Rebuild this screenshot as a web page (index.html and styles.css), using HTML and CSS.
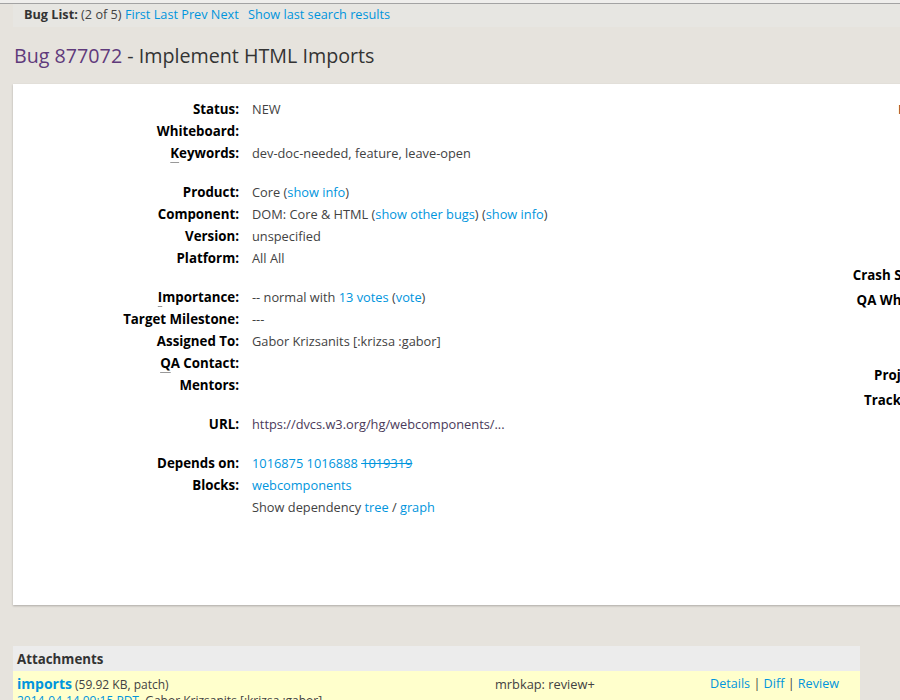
FILE: index.html
```html
<!DOCTYPE html>
<html>
<head>
<meta charset="utf-8">
<title>Bug 877072 - Implement HTML Imports</title>
<link rel="stylesheet" href="styles.css">
</head>
<body>
<div class="topline"></div>
<div class="navbar">
  <b class="nav-label">Bug List:</b> (2 of 5)
  <a href="#">First</a> <a href="#">Last</a> <a href="#">Prev</a> <a href="#">Next</a>
  <a href="#" class="nav-last">Show last search results</a>
</div>
<h1 class="title"><a href="#" class="bug-id">Bug 877072</a> - Implement HTML Imports</h1>

<div class="card">
  <div class="fields">
    <div class="lbl">Status:</div><div class="val">NEW</div>
    <div class="lbl">Whiteboard:</div><div class="val"></div>
    <div class="lbl"><span class="ak">K</span>eywords:</div><div class="val">dev-doc-needed, feature, leave-open</div>
    <div class="spacer"></div>
    <div class="lbl">Product:</div><div class="val">Core (<a href="#">show info</a>)</div>
    <div class="lbl">Component:</div><div class="val">DOM: Core &amp; HTML (<a href="#">show other bugs</a>) (<a href="#">show info</a>)</div>
    <div class="lbl">Version:</div><div class="val">unspecified</div>
    <div class="lbl">Platform:</div><div class="val">All All</div>
    <div class="spacer"></div>
    <div class="lbl"><span class="ak">I</span>mportance:</div><div class="val">-- normal with <a href="#">13 votes</a> (<a href="#">vote</a>)</div>
    <div class="lbl">Target Milestone:</div><div class="val">---</div>
    <div class="lbl">Assigned To:</div><div class="val">Gabor Krizsanits [:krizsa :gabor]</div>
    <div class="lbl"><span class="ak">Q</span>A Contact:</div><div class="val"></div>
    <div class="lbl">Mentors:</div><div class="val"></div>
    <div class="spacer"></div>
    <div class="lbl">URL:</div><div class="val url">https://dvcs.w3.org/hg/webcomponents/...</div>
    <div class="spacer"></div>
    <div class="lbl">Depends on:</div><div class="val"><a href="#">1016875</a> <a href="#">1016888</a> <a href="#" class="closed">1019319</a></div>
    <div class="lbl">Blocks:</div><div class="val"><a href="#">webcomponents</a></div>
    <div class="lbl"></div><div class="val">Show dependency <a href="#">tree</a> / <a href="#">graph</a></div>
  </div>
  <div class="side">
    <div class="side-top">Reported:</div>
    <div class="side-lbl crash">Crash Signature:</div>
    <div class="side-lbl">QA Whiteboard:</div>
    <div class="side-lbl proj">Project Flags:</div>
    <div class="side-lbl">Tracking Flags:</div>
  </div>
</div>

<table class="attachments">
  <tr class="att-head"><th colspan="3">Attachments</th></tr>
  <tr class="att-row">
    <td class="att-name">
      <a href="#" class="att-title">imports</a> <span class="att-size">(59.92 KB, patch)</span><br>
      <a href="#" class="att-date">2014-04-14 09:15 PDT</a>, Gabor Krizsanits [:krizsa :gabor]
    </td>
    <td class="att-flags">mrbkap: review+</td>
    <td class="att-actions"><a href="#">Details</a> | <a href="#">Diff</a> | <a href="#">Review</a></td>
  </tr>
</table>
</body>
</html>
```

FILE: styles.css
```css
html {
  overflow: hidden;
}
body {
  margin: 0;
  background: #e6e3dd;
  font-family: "Open Sans", "Noto Sans", sans-serif;
  font-size: 12.8px;
  color: #424242;
}
a {
  color: #0095dd;
  text-decoration: none;
}
.topline {
  height: 3px;
  background: #efeeec;
  border-bottom: 1px solid #a3a3a3;
}
.navbar {
  margin-left: 13px;
  height: 23px;
  line-height: 21px;
  padding-left: 11px;
  background: #e7e6e2;
  color: #424242;
  font-size: 12.7px;
}
.nav-label {
  color: #333;
}
.nav-last {
  margin-left: 6px;
}
.title {
  margin: 13px 0 0 14px;
  font-size: 19.7px;
  font-weight: normal;
  line-height: 32px;
  color: #333;
}
.bug-id {
  color: #5f3a7b;
}
.card {
  margin: 12px 0 0 13px;
  width: 1100px;
  height: 521px;
  background: #fff;
  box-shadow: 0 1px 2px rgba(0, 0, 0, 0.25);
  display: flex;
  box-sizing: border-box;
  padding-top: 14px;
}
.fields {
  width: 600px;
  display: grid;
  grid-template-columns: 226px 1fr;
  column-gap: 13px;
  grid-auto-rows: auto;
  align-content: start;
  line-height: 22px;
}
.fields .spacer {
  grid-column: 1 / 3;
  height: 17px;
}
.lbl {
  text-align: right;
  font-weight: bold;
  font-size: 13.3px;
  color: #000;
  height: 22px;
  box-sizing: border-box;
  padding-top: 1px;
  line-height: 21px;
}
.val {
  height: 22px;
  white-space: nowrap;
}
.ak {
  text-decoration: underline;
  text-decoration-color: #999;
  text-underline-offset: 4px;
}
.url {
  color: #4a3a5a;
}
.closed {
  text-decoration: line-through;
}
.side {
  width: 349px;
  text-align: right;
  line-height: 25px;
  font-weight: bold;
  font-size: 13.3px;
  color: #000;
}
.side-top {
  font-weight: normal;
  color: #5a2a10;
  text-align: left;
  padding-left: 285px;
  margin-top: -1px;
}
.side-lbl.crash {
  margin-top: 141px;
}
.side-lbl.proj {
  margin-top: 50px;
}
.attachments {
  margin: 41px 0 0 13px;
  width: 847px;
  border-collapse: collapse;
  font-size: 12.8px;
}
.att-head th {
  background: #ececec;
  text-align: left;
  font-weight: bold;
  font-size: 13.3px;
  color: #333;
  height: 25px;
  padding: 0 4px;
}
.att-row td {
  background: #ffffcc;
  vertical-align: top;
  padding: 5px 4px 0 4px;
  line-height: 16px;
}
.att-name {
  width: 474px;
  font-size: 12px;
}
.att-title {
  font-weight: bold;
  font-size: 14px;
}
.att-size {
  font-size: 12px;
}
.att-date {
  font-size: 12px;
}
.att-flags {
  padding-left: 0 !important;
  font-size: 12.8px;
}
.att-actions {
  text-align: right;
  padding-right: 21px !important;
  white-space: nowrap;
  color: #424242;
  font-size: 12.6px;
}
```
